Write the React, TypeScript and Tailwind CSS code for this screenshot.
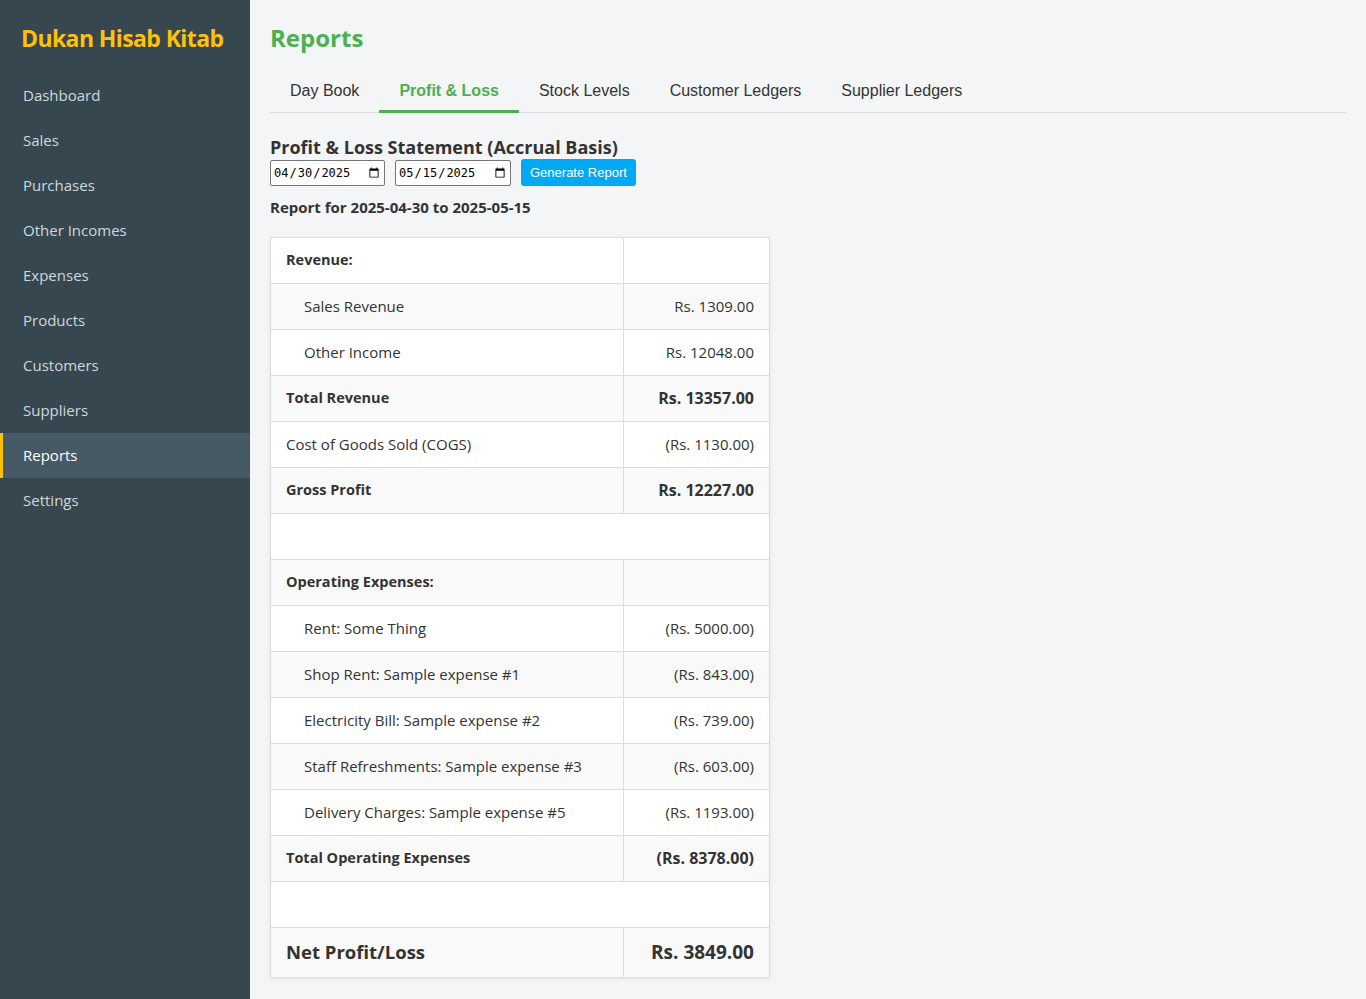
import React from "react";

type Row = {
  label?: string;
  value?: string;
  kind: "head" | "item" | "total" | "plain" | "blank" | "net";
};

const navItems = [
  "Dashboard",
  "Sales",
  "Purchases",
  "Other Incomes",
  "Expenses",
  "Products",
  "Customers",
  "Suppliers",
  "Reports",
  "Settings",
];

const tabs = ["Day Book", "Profit & Loss", "Stock Levels", "Customer Ledgers", "Supplier Ledgers"];

const rows: Row[] = [
  { label: "Revenue:", kind: "head" },
  { label: "Sales Revenue", value: "Rs. 1309.00", kind: "item" },
  { label: "Other Income", value: "Rs. 12048.00", kind: "item" },
  { label: "Total Revenue", value: "Rs. 13357.00", kind: "total" },
  { label: "Cost of Goods Sold (COGS)", value: "(Rs. 1130.00)", kind: "plain" },
  { label: "Gross Profit", value: "Rs. 12227.00", kind: "total" },
  { kind: "blank" },
  { label: "Operating Expenses:", kind: "head" },
  { label: "Rent: Some Thing", value: "(Rs. 5000.00)", kind: "item" },
  { label: "Shop Rent: Sample expense #1", value: "(Rs. 843.00)", kind: "item" },
  { label: "Electricity Bill: Sample expense #2", value: "(Rs. 739.00)", kind: "item" },
  { label: "Staff Refreshments: Sample expense #3", value: "(Rs. 603.00)", kind: "item" },
  { label: "Delivery Charges: Sample expense #5", value: "(Rs. 1193.00)", kind: "item" },
  { label: "Total Operating Expenses", value: "(Rs. 8378.00)", kind: "total" },
  { kind: "blank" },
  { label: "Net Profit/Loss", value: "Rs. 3849.00", kind: "net" },
];

function Sidebar() {
  return (
    <aside className="w-[250px] shrink-0 bg-[#37474f] min-h-[999px]">
      <h1 className="pl-[21px] pt-[22px] pb-[19px] whitespace-nowrap text-[23px] tracking-[-0.6px] leading-[32px] font-bold text-[#ffc107]">
        Dukan Hisab Kitab
      </h1>
      <nav className="flex flex-col">
        {navItems.map((item) => {
          const active = item === "Reports";
          return (
            <a
              key={item}
              href="#"
              className={
                active
                  ? "h-[45px] flex items-center pl-[20px] border-l-[3px] border-[#ffc107] bg-[#465a65] text-white text-[15px]"
                  : "h-[45px] flex items-center pl-[23px] text-[#cfd8dc] text-[15px]"
              }
            >
              {item}
            </a>
          );
        })}
      </nav>
    </aside>
  );
}

function Tabs() {
  return (
    <div className="flex border-b border-[#dddddd] mt-[14px] font-['Liberation_Sans',Arial,sans-serif]">
      {tabs.map((t) => {
        const active = t === "Profit & Loss";
        return (
          <button
            key={t}
            className={
              active
                ? "px-[20px] h-[45px] text-[16px] font-bold text-[#4caf50] border-b-[3px] border-[#4caf50] -mb-px pt-[3px]"
                : "px-[20px] h-[45px] text-[16px] text-[#333333] -mb-px"
            }
          >
            {t}
          </button>
        );
      })}
    </div>
  );
}

function ReportTable() {
  return (
    <table className="w-[500px] border-collapse bg-white text-[15px] text-[#333333] shadow-[0_1px_3px_rgba(0,0,0,0.08)]">
      <tbody>
        {rows.map((r, i) => {
          const stripe = i % 2 === 1 ? "bg-[#f9f9f9]" : "bg-white";
          if (r.kind === "blank") {
            return (
              <tr key={i} className={stripe}>
                <td colSpan={2} className="h-[46px] border border-[#dddddd]"></td>
              </tr>
            );
          }
          const bold = r.kind === "head" || r.kind === "total";
          const labelCls =
            r.kind === "net"
              ? "h-[50px] px-[15px] border border-[#dddddd] font-bold text-[18.5px]"
              : r.kind === "item"
              ? "h-[46px] pl-[33px] pr-[15px] border border-[#dddddd]"
              : "h-[46px] px-[15px] border border-[#dddddd]" + (bold ? " font-bold text-[14.5px]" : "");
          const valueCls =
            r.kind === "net"
              ? "w-[146px] px-[15px] border border-[#dddddd] text-right font-bold text-[19px]"
              : "w-[146px] px-[15px] border border-[#dddddd] text-right" + (bold ? " font-bold text-[16px]" : "");
          return (
            <tr key={i} className={stripe}>
              <td className={labelCls}>{r.label}</td>
              <td className={valueCls}>{r.value}</td>
            </tr>
          );
        })}
      </tbody>
    </table>
  );
}

export default function App() {
  return (
    <div className="flex min-h-[999px] font-['Open_Sans','Noto_Sans',sans-serif]">
      <Sidebar />
      <main className="flex-1 bg-[#f4f5f7] px-[20px] pb-[20px]">
        <h2 className="pt-[22px] text-[24px] leading-[32px] font-bold text-[#4caf50]">Reports</h2>
        <Tabs />
        <h3 className="mt-[22px] text-[18px] leading-[24px] font-bold text-[#333333]">
          Profit &amp; Loss Statement (Accrual Basis)
        </h3>
        <div className="flex items-center gap-[10px]">
          <input
            type="date"
            defaultValue="2025-04-30"
            className="w-[115px] h-[26px] border border-[#767676] rounded-[2px] bg-white px-[2px] text-[12px] text-black font-['DejaVu_Sans_Mono',monospace]"
          />
          <input
            type="date"
            defaultValue="2025-05-15"
            className="w-[116px] h-[26px] border border-[#767676] rounded-[2px] bg-white px-[2px] text-[12px] text-black font-['DejaVu_Sans_Mono',monospace]"
          />
          <button className="h-[27px] px-[9px] rounded-[3px] bg-[#03a9f4] text-white text-[13px] font-['Liberation_Sans',Arial,sans-serif]">
            Generate Report
          </button>
        </div>
        <p className="mt-[10px] mb-[18px] text-[15px] font-bold text-[#333333]">
          Report for 2025-04-30 to 2025-05-15
        </p>
        <ReportTable />
      </main>
    </div>
  );
}
